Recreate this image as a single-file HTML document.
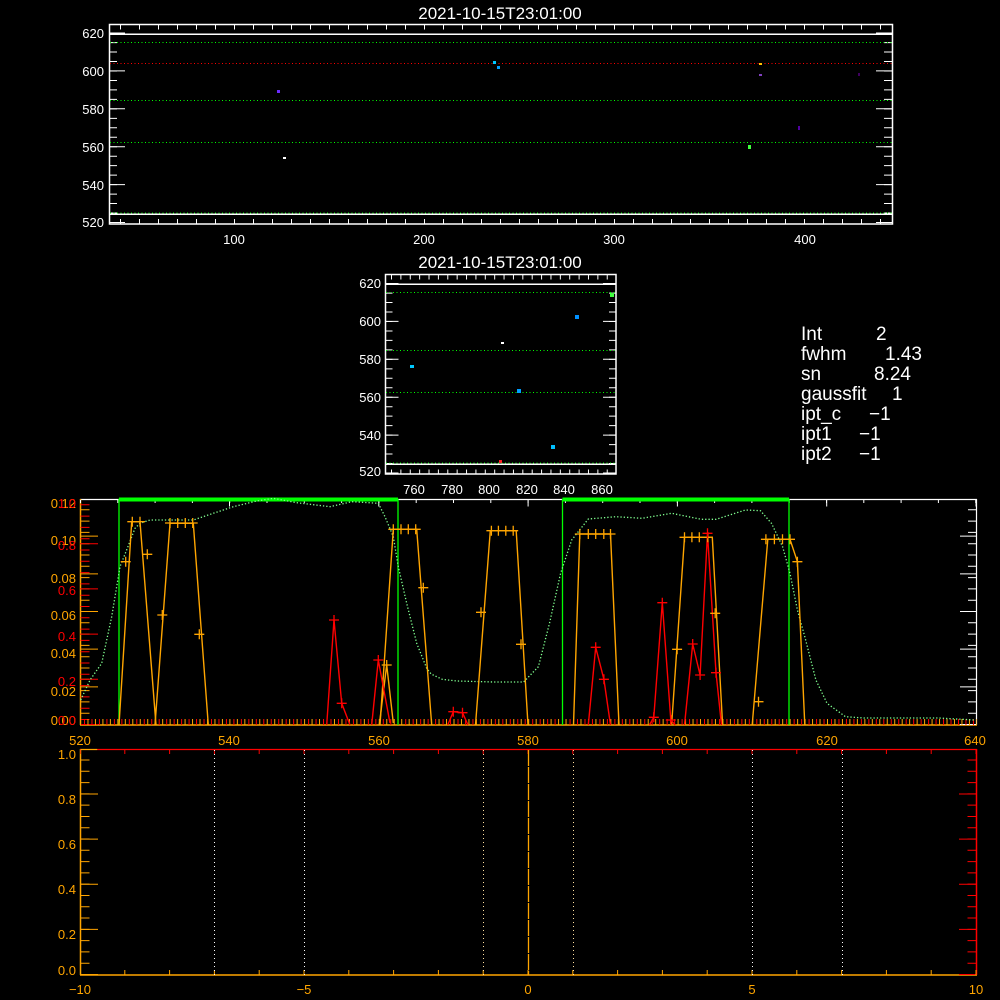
<!DOCTYPE html>
<html><head><meta charset="utf-8"><style>
html,body{margin:0;padding:0;background:#000;}
svg{display:block;}
text{font-family:"Liberation Sans",sans-serif;}
</style></head><body>
<svg width="1000" height="1000" viewBox="0 0 1000 1000" xmlns="http://www.w3.org/2000/svg">
<rect width="1000" height="1000" fill="#000"/>

<!-- ===== TOP PLOT ===== -->
<text x="500" y="19" fill="#fff" font-size="17" text-anchor="middle">2021-10-15T23:01:00</text>
<g stroke="#fff" fill="none" stroke-width="1.5">
<rect x="109.5" y="24.5" width="783" height="199.5"/>
</g>
<line x1="113" y1="223" x2="113" y2="25" stroke="#fff" stroke-width="8" stroke-dasharray="1 8.47"/>
<line x1="117" y1="223" x2="117" y2="25" stroke="#fff" stroke-width="16" stroke-dasharray="1 36.9"/>
<line x1="888" y1="223" x2="888" y2="25" stroke="#fff" stroke-width="8" stroke-dasharray="1 8.47"/>
<line x1="884" y1="223" x2="884" y2="25" stroke="#fff" stroke-width="16" stroke-dasharray="1 36.9"/>
<line x1="120" y1="27" x2="892" y2="27" stroke="#fff" stroke-width="5" stroke-dasharray="1 18"/>
<line x1="120" y1="221.5" x2="892" y2="221.5" stroke="#fff" stroke-width="5" stroke-dasharray="1 18"/>
<line x1="110" y1="34.3" x2="892" y2="34.3" stroke="#fff" stroke-width="1.5"/>
<line x1="110" y1="214.3" x2="892" y2="214.3" stroke="#fff" stroke-width="1.5"/>
<g stroke="#00ff00" stroke-width="1" stroke-dasharray="1 2.5">
<line x1="110" y1="42.5" x2="892" y2="42.5"/>
<line x1="110" y1="100.5" x2="892" y2="100.5"/>
<line x1="110" y1="142.5" x2="892" y2="142.5"/>
<line x1="110" y1="213" x2="892" y2="213"/>
</g>
<line x1="110" y1="63.5" x2="892" y2="63.5" stroke="#ff0000" stroke-width="1" stroke-dasharray="1 2.5"/>
<rect x="277" y="90" width="3" height="3" fill="#6a2bff"/>
<rect x="283" y="157" width="3" height="2" fill="#fff"/>
<rect x="493" y="61" width="3" height="3" fill="#00c8ff"/>
<rect x="497" y="66" width="3" height="3" fill="#00a0ff"/>
<rect x="759" y="63" width="3" height="2" fill="#ffc000"/>
<rect x="759" y="74" width="3" height="2" fill="#8040c0"/>
<rect x="748" y="145" width="3" height="4" fill="#40ff40"/>
<rect x="798" y="126" width="2" height="4" fill="#5000a0"/>
<rect x="858" y="73" width="2" height="3" fill="#400060"/>
<g fill="#fff" font-size="13" text-anchor="end">
<text x="104" y="38">620</text><text x="104" y="76">600</text><text x="104" y="114">580</text>
<text x="104" y="152">560</text><text x="104" y="190">540</text><text x="104" y="227">520</text>
</g>
<g fill="#fff" font-size="13" text-anchor="middle">
<text x="234" y="244">100</text><text x="424" y="244">200</text><text x="614" y="244">300</text><text x="805" y="244">400</text>
</g>

<!-- ===== MIDDLE PLOT ===== -->
<text x="500" y="268" fill="#fff" font-size="17" text-anchor="middle">2021-10-15T23:01:00</text>
<rect x="385.5" y="274.5" width="230.5" height="199.5" stroke="#fff" stroke-width="1.5" fill="none"/>
<line x1="389" y1="473.5" x2="389" y2="275" stroke="#fff" stroke-width="7" stroke-dasharray="1 8.47"/>
<line x1="392" y1="473.5" x2="392" y2="275" stroke="#fff" stroke-width="13" stroke-dasharray="1 36.9"/>
<line x1="612.5" y1="473.5" x2="612.5" y2="275" stroke="#fff" stroke-width="7" stroke-dasharray="1 8.47"/>
<line x1="609.5" y1="473.5" x2="609.5" y2="275" stroke="#fff" stroke-width="13" stroke-dasharray="1 36.9"/>
<line x1="386" y1="277" x2="616" y2="277" stroke="#fff" stroke-width="5" stroke-dasharray="1 8.38" stroke-dashoffset="-5"/>
<line x1="386" y1="472" x2="616" y2="472" stroke="#fff" stroke-width="5" stroke-dasharray="1 8.38" stroke-dashoffset="-5"/>
<line x1="386" y1="284.3" x2="616" y2="284.3" stroke="#fff" stroke-width="1.5"/>
<line x1="386" y1="464.3" x2="616" y2="464.3" stroke="#fff" stroke-width="1.5"/>
<g stroke="#00ff00" stroke-width="1" stroke-dasharray="1 2.5">
<line x1="386" y1="292.5" x2="616" y2="292.5"/>
<line x1="386" y1="350.5" x2="616" y2="350.5"/>
<line x1="386" y1="392.5" x2="616" y2="392.5"/>
<line x1="386" y1="463" x2="616" y2="463"/>
</g>
<rect x="410" y="365" width="4" height="3" fill="#00c8ff"/>
<rect x="501" y="342" width="3" height="2" fill="#fff"/>
<rect x="517" y="389" width="4" height="4" fill="#00a0ff"/>
<rect x="575" y="315" width="4" height="4" fill="#0090ff"/>
<rect x="551" y="445" width="4" height="4" fill="#00c0ff"/>
<rect x="499" y="460" width="3" height="3" fill="#ff2020"/>
<rect x="610" y="293" width="4" height="4" fill="#40ff40"/>
<g fill="#fff" font-size="13" text-anchor="end">
<text x="381" y="288">620</text><text x="381" y="326">600</text><text x="381" y="364">580</text>
<text x="381" y="402">560</text><text x="381" y="440">540</text><text x="381" y="476">520</text>
</g>
<g fill="#fff" font-size="13" text-anchor="middle">
<text x="414" y="494">760</text><text x="452" y="494">780</text><text x="489" y="494">800</text>
<text x="527" y="494">820</text><text x="564" y="494">840</text><text x="602" y="494">860</text>
</g>

<g fill="#fff" font-size="19">
<text x="801" y="340">Int</text><text x="876" y="340">2</text>
<text x="801" y="360">fwhm</text><text x="885" y="360">1.43</text>
<text x="801" y="380">sn</text><text x="874" y="380">8.24</text>
<text x="801" y="400">gaussfit</text><text x="892" y="400">1</text>
<text x="801" y="420">ipt_c</text><text x="869" y="420">−1</text>
<text x="801" y="440">ipt1</text><text x="859" y="440">−1</text>
<text x="801" y="460">ipt2</text><text x="859" y="460">−1</text>
</g>

<!-- ===== SPECTRUM PLOT ===== -->
<line x1="80" y1="499.5" x2="977" y2="499.5" stroke="#fff" stroke-width="1.2"/>
<line x1="976.5" y1="499" x2="976.5" y2="725" stroke="#fff" stroke-width="1.2"/>
<line x1="80" y1="725" x2="977" y2="725" stroke="#ffa500" stroke-width="1.5"/>
<line x1="80.5" y1="499" x2="80.5" y2="725" stroke="#ffa500" stroke-width="1.5"/>
<line x1="85" y1="725" x2="85" y2="499" stroke="#ffa500" stroke-width="9" stroke-dasharray="1 10.3"/>
<line x1="89" y1="725" x2="89" y2="499" stroke="#ffa500" stroke-width="18" stroke-dasharray="1 36.67"/>
<line x1="85" y1="725" x2="85" y2="499" stroke="#ff0000" stroke-width="9" stroke-dasharray="1 10.3" stroke-dashoffset="-5"/>
<line x1="89" y1="725" x2="89" y2="499" stroke="#ff0000" stroke-width="18" stroke-dasharray="1 44.2" stroke-dashoffset="-45.2"/>
<line x1="972" y1="725" x2="972" y2="499" stroke="#fff" stroke-width="8" stroke-dasharray="1 10.3"/>
<line x1="968" y1="725" x2="968" y2="499" stroke="#fff" stroke-width="16" stroke-dasharray="1 36.67"/>
<line x1="80" y1="722" x2="977" y2="722" stroke="#ffa500" stroke-width="6" stroke-dasharray="1 6.47"/>
<line x1="84" y1="722" x2="977" y2="722" stroke="#ff0000" stroke-width="6" stroke-dasharray="1 6.47"/>
<line x1="229" y1="503" x2="977" y2="503" stroke="#fff" stroke-width="7" stroke-dasharray="1 148.3"/>
<line x1="80" y1="501.5" x2="977" y2="501.5" stroke="#fff" stroke-width="3" stroke-dasharray="1 36.3"/>
<g stroke="#00ff00" fill="none">
<line x1="119" y1="499.5" x2="398" y2="499.5" stroke-width="4"/>
<line x1="562.5" y1="499.5" x2="789" y2="499.5" stroke-width="4"/>
<line x1="119" y1="499" x2="119" y2="725" stroke-width="1.3"/>
<line x1="398" y1="499" x2="398" y2="725" stroke-width="1.3"/>
<line x1="562.5" y1="499" x2="562.5" y2="725" stroke-width="1.3"/>
<line x1="789" y1="499" x2="789" y2="725" stroke-width="1.3"/>
</g>
<polyline fill="none" stroke="#80ff90" stroke-width="1.3" stroke-dasharray="1.3 2" points="80.7,700 90,680 101.7,663.3 111.7,616.7 120,566.7 127.3,548.3 135,528.3 140,523.3 150,520 173.3,520 193.3,520 213.3,513.3 233.3,506.7 256.7,501 273.3,498.3 296.7,502.7 330,506.7 351.7,501.7 378.3,503.3 385,516.7 393.3,536.7 398.3,566.7 406.7,603.3 416.7,643.3 426.7,668.3 431.1,674 442.2,679.3 457,681 494,682 523.6,682 538.4,666.7 549.5,623.3 560.6,573.3 571.7,540 588.3,519 616.1,516.7 642,518.3 671.6,513.3 701.2,519.3 716,519.3 745.6,510 760.4,510.7 771.5,523.3 782.6,546.7 790,573.3 797.4,610 804.8,636.7 815.9,680 827,703.3 845.5,716.7 864,718 938,718 975,720"/>
<g fill="none" stroke="#ffa500" stroke-width="1.4">
<polyline points="119,725 131.7,521.7 140,521.7 156,725"/>
<polyline points="155,725 170,523.3 193.3,523.3 208.3,725"/>
<polyline points="380,725 393.3,529.3 416.7,529.3 431.7,725"/>
<polyline points="379.3,725 386.7,665 393.3,723"/>
<polyline points="475.5,725 490.3,530.7 516.2,530.7 528,725"/>
<polyline points="573.5,725 579.8,534 610.5,534 619,725"/>
<polyline points="671.6,725 684.5,537.3 712.3,537.3 722.6,725"/>
<polyline points="752.2,725 767.8,539.3 790,539.3 797.4,561.7 804.8,725"/>
</g>
<g fill="none" stroke="#ff0000" stroke-width="1.4">
<polyline points="326.7,725 334,620 341.7,703.3 350,725"/>
<polyline points="371.7,725 378.3,660 390,723"/>
<polyline points="447.7,725 453.3,711.7 462.5,712.7 468,725"/>
<polyline points="588.3,725 595.7,647.3 603.9,679.3 610.5,725"/>
<polyline points="649.4,725 653.8,717.3 662.3,602.7 670.8,720 675.3,725"/>
<polyline points="684.5,725 692.7,644 700.1,675 707.5,533.3 716,672.7 721.5,725"/>
</g>
<g stroke="#ffa500" stroke-width="1.3">
<path d="M120.7 561.7h10M125.7 556.7v10 M127.3 521.7h10M132.3 516.7v10 M135 521.7h10M140 516.7v10 M142.3 554.3h10M147.3 549.3v10 M157.3 615h10M162.3 610v10 M165 523h10M170 518v10 M172.7 523h10M177.7 518v10 M180.3 523h10M185.3 518v10 M187.7 523h10M192.7 518v10 M194.3 634.3h10M199.3 629.3v10 M388.3 529.3h10M393.3 524.3v10 M396 529.3h10M401 524.3v10 M403.3 529.3h10M408.3 524.3v10 M410.7 529.3h10M415.7 524.3v10 M418.3 587.7h10M423.3 582.7v10 M381.7 665h10M386.7 660v10 M486.4 530.7h10M491.4 525.7v10 M493.4 530.7h10M498.4 525.7v10 M500.8 530.7h10M505.8 525.7v10 M508.2 530.7h10M513.2 525.7v10 M476 612.3h10M481 607.3v10 M516 644.3h10M521 639.3v10 M574.8 534h10M579.8 529v10 M583.3 534h10M588.3 529v10 M590.7 534h10M595.7 529v10 M598.8 534h10M603.8 529v10 M605.5 534h10M610.5 529v10 M679.5 537.3h10M684.5 532.3v10 M686.9 537.3h10M691.9 532.3v10 M694.3 537.3h10M699.3 532.3v10 M702.8 537.3h10M707.8 532.3v10 M672.1 649.3h10M677.1 644.3v10 M710.2 613.3h10M715.2 608.3v10 M753.5 701.7h10M758.5 696.7v10 M760.9 539.3h10M765.9 534.3v10 M769.4 539.3h10M774.4 534.3v10 M777.5 539.3h10M782.5 534.3v10 M785 539.3h10M790 534.3v10 M792.4 561.7h10M797.4 556.7v10"/>
</g>
<g stroke="#ff0000" stroke-width="1.3">
<path d="M329 620h10M334 615v10 M336.7 703.3h10M341.7 698.3v10 M373.3 660h10M378.3 655v10 M448.3 711.7h10M453.3 706.7v10 M457.5 712.7h10M462.5 707.7v10 M590.7 647.3h10M595.7 642.3v10 M598.9 679.3h10M603.9 674.3v10 M648.8 717.3h10M653.8 712.3v10 M657.3 602.7h10M662.3 597.7v10 M665.8 720h10M670.8 715v10 M687.7 644h10M692.7 639v10 M695.1 675h10M700.1 670v10 M702.5 533.3h10M707.5 528.3v10 M711 672.7h10M716 667.7v10"/>
</g>
<g font-size="13" text-anchor="end">
<text x="76" y="508" fill="#ffa500">0.12</text>
<text x="76" y="545" fill="#ffa500">0.10</text>
<text x="76" y="583" fill="#ffa500">0.08</text>
<text x="76" y="620" fill="#ffa500">0.06</text>
<text x="76" y="658" fill="#ffa500">0.04</text>
<text x="76" y="696" fill="#ffa500">0.02</text>
<text x="76" y="725" fill="#ffa500">0.00</text>
<text x="76" y="508" fill="#ff0000">1.0</text>
<text x="76" y="550" fill="#ff0000">0.8</text>
<text x="76" y="595" fill="#ff0000">0.6</text>
<text x="76" y="641" fill="#ff0000">0.4</text>
<text x="76" y="686" fill="#ff0000">0.2</text>
<text x="76" y="725" fill="#ff0000">0.0</text>
</g>
<g font-size="13" text-anchor="middle" fill="#ffa500">
<text x="80" y="745">520</text><text x="229" y="745">540</text><text x="379" y="745">560</text>
<text x="528" y="745">580</text><text x="677" y="745">600</text><text x="827" y="745">620</text><text x="975" y="745">640</text>
</g>

<!-- ===== BOTTOM PLOT ===== -->
<line x1="97" y1="749.5" x2="977" y2="749.5" stroke="#ff0000" stroke-width="1.3"/>
<line x1="80" y1="749.5" x2="97" y2="749.5" stroke="#ffa500" stroke-width="1.3"/>
<line x1="976.5" y1="749" x2="976.5" y2="975" stroke="#ff0000" stroke-width="1.5"/>
<line x1="80.5" y1="749" x2="80.5" y2="975" stroke="#ffa500" stroke-width="1.5"/>
<line x1="80" y1="975" x2="977" y2="975" stroke="#ffa500" stroke-width="1.5"/>
<line x1="85" y1="975" x2="85" y2="749" stroke="#ffa500" stroke-width="9" stroke-dasharray="1 10.29"/>
<line x1="89" y1="975" x2="89" y2="749" stroke="#ffa500" stroke-width="18" stroke-dasharray="1 44.14"/>
<line x1="972" y1="975" x2="972" y2="749" stroke="#ff0000" stroke-width="9" stroke-dasharray="1 10.29"/>
<line x1="968" y1="975" x2="968" y2="749" stroke="#ff0000" stroke-width="18" stroke-dasharray="1 44.14"/>
<line x1="80" y1="972.5" x2="977" y2="972.5" stroke="#ffa500" stroke-width="5" stroke-dasharray="1 43.8" stroke-dashoffset="-44.3"/>
<line x1="80" y1="751.5" x2="977" y2="751.5" stroke="#ff0000" stroke-width="5" stroke-dasharray="1 43.8" stroke-dashoffset="-44.3"/>
<g stroke="#fff" stroke-width="1" stroke-dasharray="1 3">
<line x1="214.5" y1="750" x2="214.5" y2="975"/>
<line x1="304.5" y1="750" x2="304.5" y2="975"/>
<line x1="483.5" y1="750" x2="483.5" y2="975" stroke="#ffe0a0"/>
<line x1="573.5" y1="750" x2="573.5" y2="975" stroke="#ffe0a0"/>
<line x1="752.5" y1="750" x2="752.5" y2="975"/>
<line x1="842.5" y1="750" x2="842.5" y2="975"/>
</g>
<line x1="528.5" y1="750" x2="528.5" y2="975" stroke="#ffa500" stroke-width="1.3" stroke-dasharray="16 1"/>
<g font-size="13" text-anchor="end" fill="#ffa500">
<text x="76" y="759">1.0</text><text x="76" y="804">0.8</text><text x="76" y="849">0.6</text>
<text x="76" y="894">0.4</text><text x="76" y="939">0.2</text><text x="76" y="975">0.0</text>
</g>
<g font-size="13" text-anchor="middle" fill="#ffa500">
<text x="80" y="994">−10</text><text x="304" y="994">−5</text><text x="528" y="994">0</text>
<text x="752" y="994">5</text><text x="976" y="994">10</text>
</g>
</svg>
</body></html>
